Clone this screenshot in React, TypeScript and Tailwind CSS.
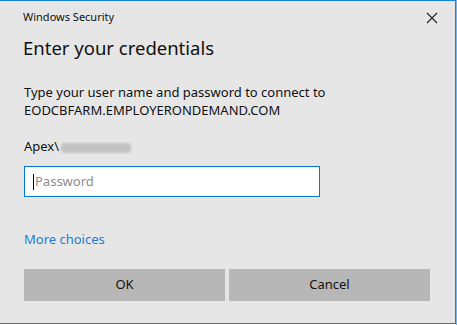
export default function App() {
  return (
    <div className="w-[457px] h-[325px] bg-white overflow-hidden flex" style={{ fontFamily: '"Noto Sans", "Open Sans", sans-serif' }}>
      <div className="w-[456px] h-[324px] shrink-0 bg-[#e6e6e6] border-t border-r border-b border-[#1883d7] flex flex-col text-[#111]">
        <div className="flex items-start justify-between pl-[23px] pr-[17px] pt-[7px] h-[30px]">
          <span className="text-[11px] leading-[18px]">Windows Security</span>
          <svg width="12" height="12" viewBox="0 0 12 12" className="mt-[4px]">
            <path d="M1 1L11 11M11 1L1 11" stroke="#222" strokeWidth="1.1" />
          </svg>
        </div>
        <div className="pl-[23px] text-[18.5px] leading-[28px] mt-[3px]">Enter your credentials</div>
        <div className="pl-[24px] mt-[21px] text-[13px] leading-[18px]">
          <div>Type your user name and password to connect to</div>
          <div>EODCBFARM.EMPLOYERONDEMAND.COM</div>
        </div>
        <div className="pl-[24px] mt-[18px] text-[13px] leading-[18px] flex items-center">
          <span>Apex\</span>
          <span className="ml-[2px] mt-[3px] w-[70px] h-[10px] rounded-[4px] bg-[#c2c2c2] blur-[1px]" />
        </div>
        <div className="ml-[24px] mt-[11px] w-[296px] h-[31px] bg-white border border-[#0078d7] flex items-center pl-[8px]">
          <span className="w-px h-[16px] bg-black" />
          <span className="text-[13px] text-[#8c8c8c] ml-[1px]">Password</span>
        </div>
        <div className="pl-[24px] mt-[33px] text-[13px] leading-[18px] text-[#1a7fd4]">More choices</div>
        <div className="pl-[24px] mt-[21px] flex gap-[4px]">
          <div className="w-[201px] h-[32px] bg-[#b7b7b7] flex items-center justify-center text-[13px]">OK</div>
          <div className="w-[201px] h-[32px] bg-[#b7b7b7] flex items-center justify-center text-[13px]">Cancel</div>
        </div>
      </div>
      <div className="flex-1 h-full bg-[#7fb4e0]" />
    </div>
  );
}
